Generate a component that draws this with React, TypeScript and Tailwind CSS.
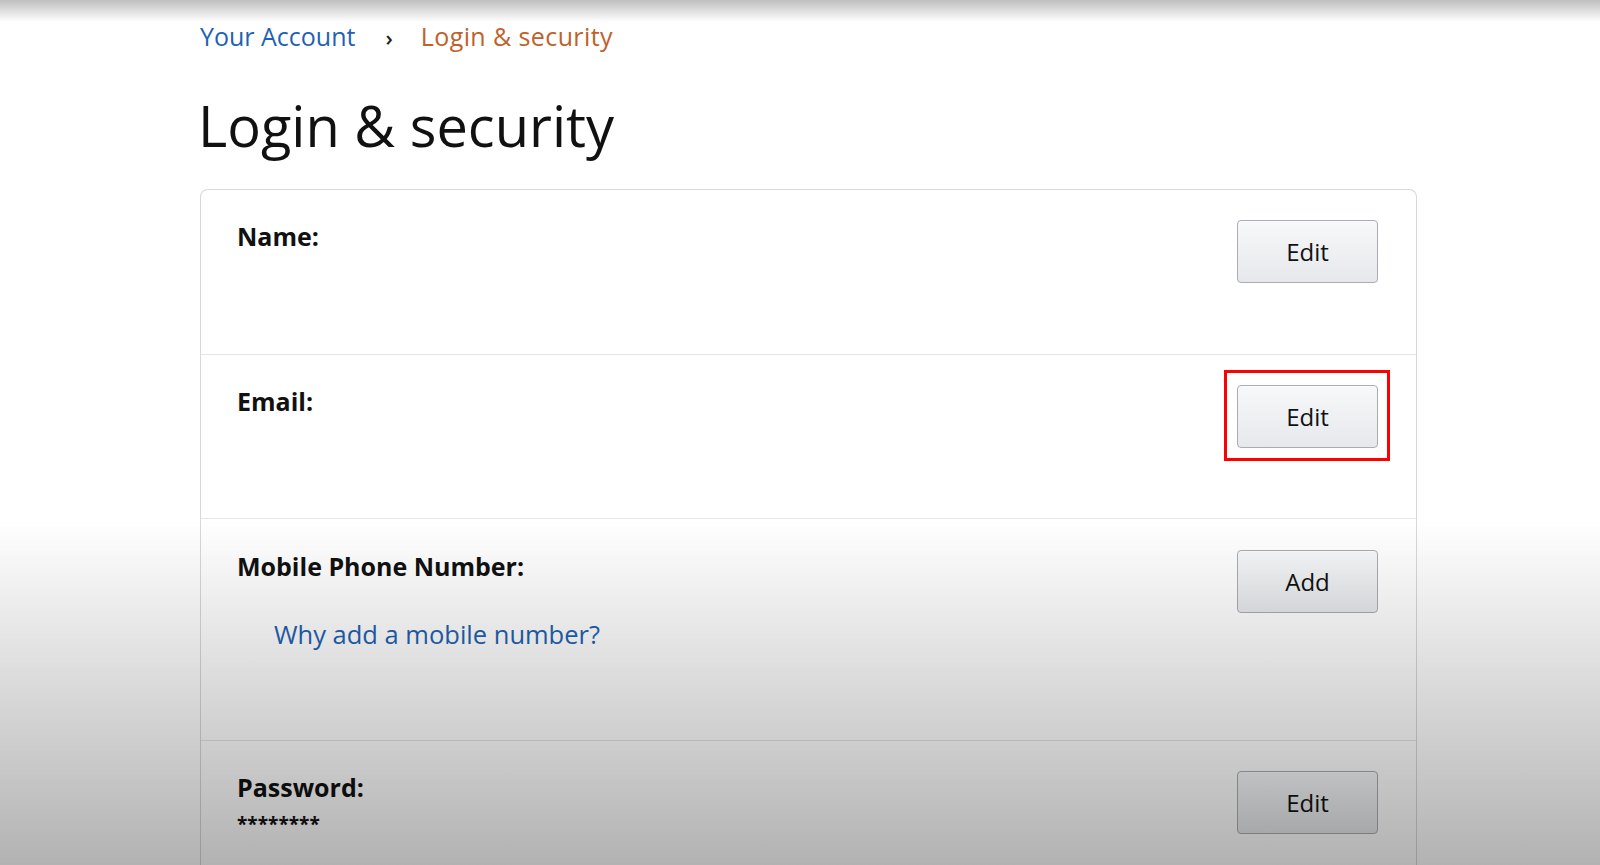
import React from "react";

const font = { fontFamily: "'Open Sans', 'Noto Sans', sans-serif" };

function EditButton({ label, highlight }: { label: string; highlight?: boolean }) {
  return (
    <div className="relative">
      {highlight && (
        <span className="absolute -left-[13px] -right-[12px] -top-[15px] -bottom-[13px] border-[3px] border-[#ff0000] pointer-events-none" />
      )}
      <button className="w-[141px] h-[63px] rounded-[4px] border border-[#a9acb2] bg-gradient-to-b from-[#f7f8fa] to-[#e6e8eb] shadow-[0_1px_0_rgba(255,255,255,0.6)_inset] text-[24px] text-[#111]">
        {label}
      </button>
    </div>
  );
}

export default function App() {
  return (
    <div className="relative min-h-screen h-[865px] overflow-hidden bg-white text-[#111]" style={font}>
      <div className="pl-[200px] w-[1417px]">
        {/* Breadcrumb */}
        <nav className="flex items-center h-[76px] pb-[2px] text-[25px]">
          <a className="text-[#1f62b3]">Your Account</a>
          <span className="ml-[30px] mr-[28px] text-[#222] text-[22px] font-semibold">›</span>
          <span className="text-[#c0612b] tracking-[0.4px]">Login &amp; security</span>
        </nav>

        <h1 className="text-[56px] leading-[72px] -ml-[2px] mt-[13px] mb-[28px] font-normal">Login &amp; security</h1>

        {/* Card */}
        <div className="border border-[#d5d9d9] rounded-t-[8px] border-b-0">
          <div className="flex justify-between items-start h-[165px] pl-[36px] pr-[38px] pt-[30px] border-b border-[#e3e6e6]">
            <div className="text-[25px] leading-[32px] font-bold">Name:</div>
            <EditButton label="Edit" />
          </div>
          <div className="flex justify-between items-start h-[164px] pl-[36px] pr-[38px] pt-[30px] border-b border-[#e3e6e6]">
            <div className="text-[25px] leading-[32px] font-bold">Email:</div>
            <EditButton label="Edit" highlight />
          </div>
          <div className="flex justify-between items-start h-[222px] pl-[36px] pr-[38px] pt-[31px] border-b border-[#e3e6e6]">
            <div>
              <div className="text-[25px] leading-[32px] font-bold">Mobile Phone Number:</div>
              <a className="block mt-[35px] ml-[37px] text-[25.5px] leading-[34px] text-[#1f62b3]">Why add a mobile number?</a>
            </div>
            <EditButton label="Add" />
          </div>
          <div className="flex justify-between items-start h-[130px] pl-[36px] pr-[38px] pt-[30px]">
            <div>
              <div className="text-[25px] leading-[32px] font-bold">Password:</div>
              <div className="mt-[9px] text-[19px] font-bold leading-[24px]">********</div>
            </div>
            <EditButton label="Edit" />
          </div>
        </div>
      </div>

      {/* video vignette overlay */}
      <div className="pointer-events-none absolute inset-x-0 top-0 h-[22px] bg-gradient-to-b from-[rgba(0,0,0,0.25)] to-transparent" />
      <div className="pointer-events-none absolute inset-x-0 top-[520px] bottom-0 bg-gradient-to-b from-transparent to-[rgba(0,0,0,0.3)]" />
    </div>
  );
}
